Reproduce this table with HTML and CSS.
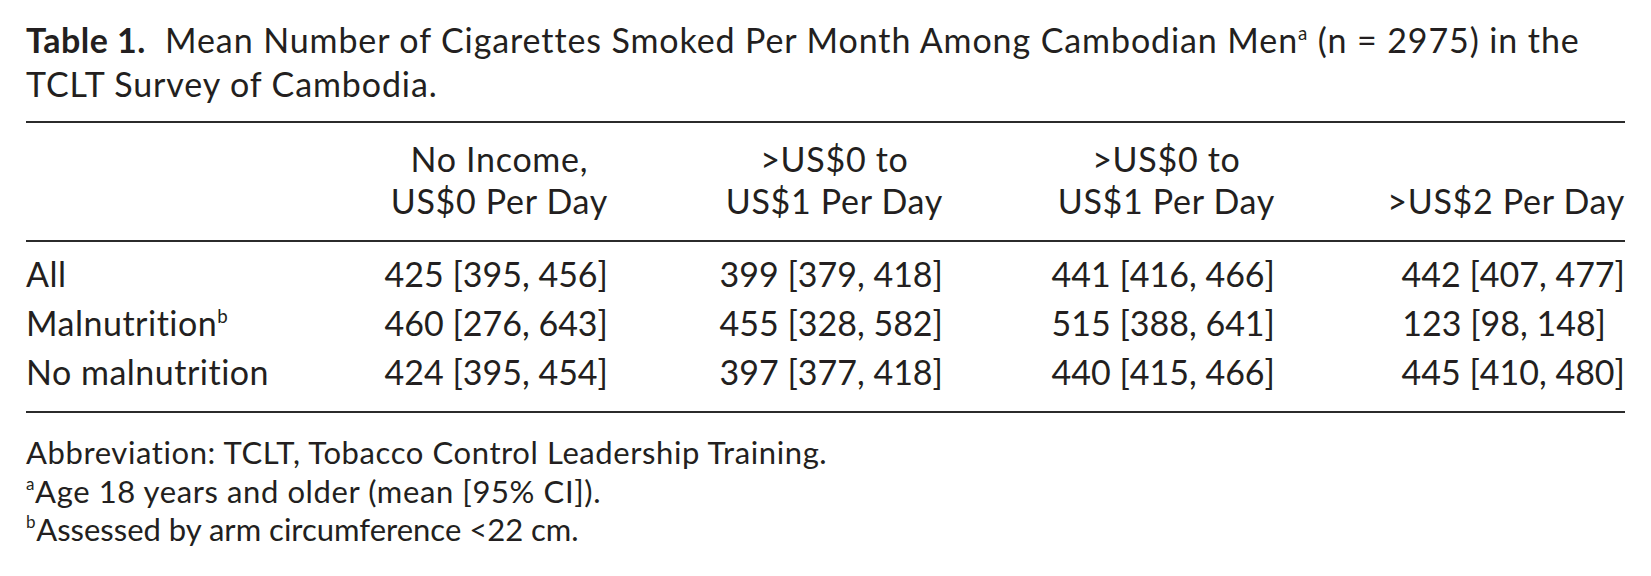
FILE: index.html
```html
<!DOCTYPE html>
<html lang="en">
<head>
<meta charset="utf-8">
<title>Table 1</title>
<link rel="stylesheet" href="styles.css">
</head>
<body>
<div class="page">
  <p class="caption"><b class="label">Table 1.</b>&nbsp; Mean Number of Cigarettes Smoked Per Month Among Cambodian Men<sup class="sup">a</sup> (n = 2975) in the<br>TCLT Survey of Cambodia.</p>
  <table class="data">
    <colgroup>
      <col class="c0"><col class="c1"><col class="c2"><col class="c3"><col class="c4">
    </colgroup>
    <thead>
      <tr>
        <th></th>
        <th><span class="hd">No Income,<br>US$0 Per Day</span></th>
        <th><span class="hd">&gt;US$0 to<br>US$1 Per Day</span></th>
        <th><span class="hd">&gt;US$0 to<br>US$1 Per Day</span></th>
        <th><span class="hd"><br>&gt;US$2 Per Day</span></th>
      </tr>
    </thead>
    <tbody>
      <tr class="first">
        <td class="rl">All</td>
        <td><span class="val">425 [395, 456]</span></td>
        <td><span class="val">399 [379, 418]</span></td>
        <td><span class="val">441 [416, 466]</span></td>
        <td><span class="val">442 [407, 477]</span></td>
      </tr>
      <tr>
        <td class="rl">Malnutrition<sup class="sup">b</sup></td>
        <td><span class="val">460 [276, 643]</span></td>
        <td><span class="val">455 [328, 582]</span></td>
        <td><span class="val">515 [388, 641]</span></td>
        <td><span class="val">123 [98, 148]</span></td>
      </tr>
      <tr class="last">
        <td class="rl">No malnutrition</td>
        <td><span class="val">424 [395, 454]</span></td>
        <td><span class="val">397 [377, 418]</span></td>
        <td><span class="val">440 [415, 466]</span></td>
        <td><span class="val">445 [410, 480]</span></td>
      </tr>
    </tbody>
  </table>
  <div class="notes">
    <p>Abbreviation: TCLT, Tobacco Control Leadership Training.</p>
    <p><sup class="fsup">a</sup>Age 18 years and older (mean [95% CI]).</p>
    <p><sup class="fsup">b</sup><span class="tight">Assessed by arm circumference &lt;22 cm.</span></p>
  </div>
</div>
</body>
</html>
```

FILE: styles.css
```css
html, body {
  margin: 0;
  padding: 0;
  background: #ffffff;
}
body {
  font-family: "Lato", "Open Sans", sans-serif;
  color: #231f20;
}
.page {
  padding: 18px 0 0 26px;
  width: 1599px;
}
.caption {
  margin: 0;
  font-size: 34px;
  line-height: 44px;
  letter-spacing: 0.9px;
}
.label {
  font-weight: 700;
  letter-spacing: 0.5px;
}
.sup {
  font-size: 0.55em;
  vertical-align: 0.7em;
  line-height: 0;
}
.data {
  margin-top: 15px;
  width: 1599px;
  border-collapse: collapse;
  table-layout: fixed;
  font-size: 34px;
  letter-spacing: 0.5px;
  border-top: 2px solid #2b2b2b;
  border-bottom: 2px solid #2b2b2b;
}
.c0 { width: 245px; }
.c1 { width: 337px; }
.c2 { width: 335px; }
.c3 { width: 332px; }
.c4 { width: 350px; }
.data th {
  font-weight: 400;
  text-align: right;
  padding: 15px 0 18px 0;
  line-height: 42px;
  border-bottom: 2px solid #2b2b2b;
  vertical-align: bottom;
}
.hd {
  display: inline-block;
  text-align: center;
  letter-spacing: 0.7px;
}
.data td {
  padding: 0;
  line-height: 49px;
  text-align: right;
  white-space: nowrap;
}
.data tr.first td { padding-top: 7px; }
.data tr.last td { padding-bottom: 15px; }
.data td.rl {
  text-align: left;
}
.val {
  display: inline-block;
  text-align: left;
  letter-spacing: 0;
  min-width: 6.55em;
}
.notes {
  margin-top: 20px;
  font-size: 31px;
  line-height: 38.5px;
  letter-spacing: 0.6px;
}
.notes p {
  margin: 0;
}
.tight {
  letter-spacing: 0;
}
.fsup {
  font-size: 0.55em;
  vertical-align: 0.75em;
  line-height: 0;
}
```
